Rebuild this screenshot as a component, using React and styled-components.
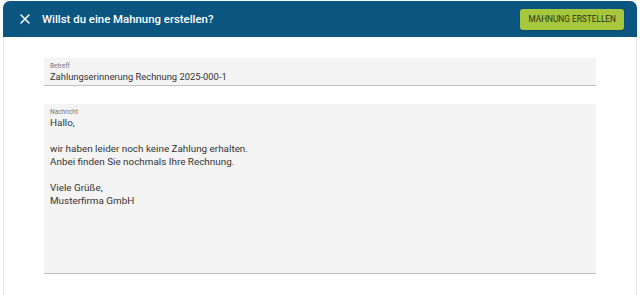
import React from 'react';
import styled, { createGlobalStyle } from 'styled-components';

const GlobalStyle = createGlobalStyle`
    html, body {
        margin: 0;
        padding: 0;
        background: #ffffff;
        font-family: Roboto, "Liberation Sans", sans-serif;
    }
`;

const message = [
    'Hallo,',
    '',
    'wir haben leider noch keine Zahlung erhalten.',
    'Anbei finden Sie nochmals Ihre Rechnung.',
    '',
    'Viele Grüße,',
    'Musterfirma GmbH',
];

function App() {
    return (
        <>
            <GlobalStyle />
            <Page>
                <Dialog>
                    <Header>
                        <CloseButton aria-label="Schließen">
                            <svg width="12" height="12" viewBox="0 0 12 12">
                                <path d="M2 2L10 10M10 2L2 10" stroke="#ffffff" strokeWidth="1.5" strokeLinecap="round" />
                            </svg>
                        </CloseButton>
                        <Title>Willst du eine Mahnung erstellen?</Title>
                        <Action>Mahnung erstellen</Action>
                    </Header>
                    <Body>
                        <Field>
                            <Label>Betreff</Label>
                            <Value>Zahlungserinnerung Rechnung 2025-000-1</Value>
                        </Field>
                        <Field $tall>
                            <Label>Nachricht</Label>
                            {message.map((line, i) => (
                                <Line key={i}>{line || '\u00a0'}</Line>
                            ))}
                        </Field>
                    </Body>
                </Dialog>
            </Page>
        </>
    );
}

export default App;

const Page = styled.div`
    width: 640px;
    height: 295px;
    padding: 1px 3px 0;
    box-sizing: border-box;
    overflow: hidden;
`;

const Dialog = styled.div`
    height: 100%;
    background: #ffffff;
    border-radius: 7px 7px 0 0;
    border-left: 1px solid #e6e6e6;
    border-right: 1px solid #e6e6e6;
    display: flex;
    flex-direction: column;
`;

const Header = styled.div`
    height: 36px;
    background: #0b5581;
    border-radius: 7px 7px 0 0;
    margin: 0 -1px;
    display: flex;
    align-items: center;
    padding: 0 13px;
    flex-shrink: 0;
`;

const CloseButton = styled.button`
    background: none;
    border: none;
    padding: 0;
    width: 14px;
    height: 14px;
    display: flex;
    align-items: center;
    justify-content: center;
    margin-left: 2px;
    cursor: pointer;
`;

const Title = styled.h1`
    flex: 1;
    margin: 0 0 0 10px;
    color: #ffffff;
    font-size: 11.4px;
    font-weight: 500;
`;

const Action = styled.button`
    height: 21px;
    padding: 0 8px;
    border: none;
    border-radius: 3px;
    background: #a6c73c;
    color: #27331a;
    font-family: Roboto, "Liberation Sans", sans-serif;
    font-size: 8.3px;
    text-transform: uppercase;
    cursor: pointer;
    box-shadow: 0 1px 2px rgba(0, 0, 0, 0.2);
`;

const Body = styled.div`
    display: flex;
    flex-direction: column;
    gap: 18px;
    padding: 21px 40px 0;
`;

const Field = styled.div`
    background: #f4f4f4;
    border-bottom: 1.5px solid #c2c2c2;
    padding: 4px 6px 0;
    box-sizing: border-box;
    height: ${p => (p.$tall ? '170px' : '27.5px')};
`;

const Label = styled.div`
    font-size: 6.5px;
    color: #777777;
    line-height: 8px;
`;

const Value = styled.div`
    font-size: 9.4px;
    color: #333333;
    line-height: 13px;
`;

const Line = styled.div`
    font-size: 9.9px;
    color: #333333;
    line-height: 13px;
`;
